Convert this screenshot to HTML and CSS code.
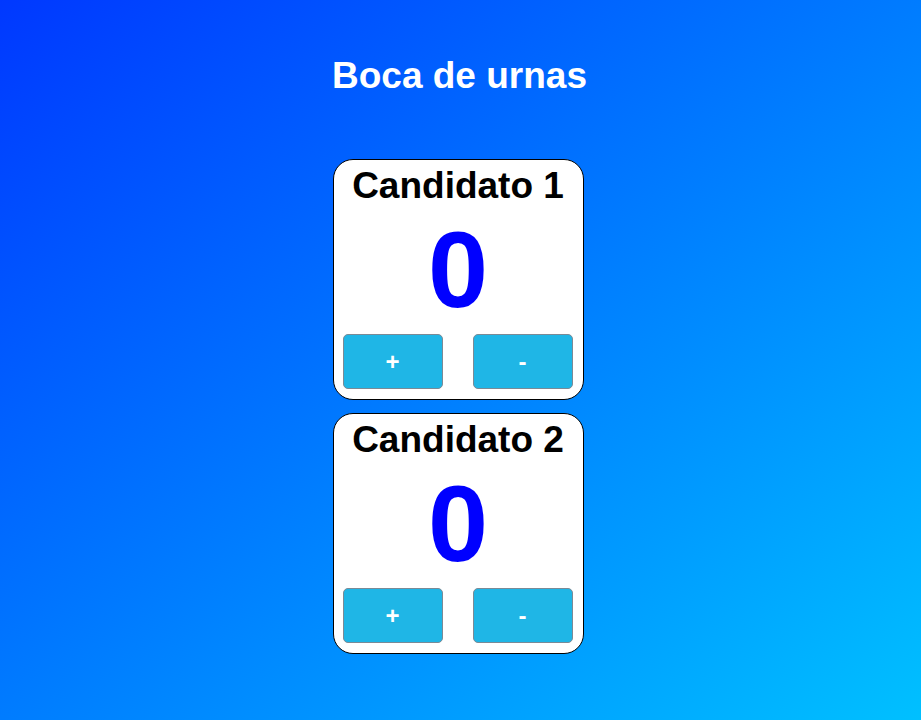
FILE: index.html
```html
<!DOCTYPE html>
<html lang="pt">
<head>
<meta charset="utf-8">
<title>Boca de urnas</title>
<link rel="stylesheet" href="styles.css">
</head>
<body>
<main class="page">
  <h1 class="title">Boca de urnas</h1>
  <div class="cards">
    <section class="card">
      <h2 class="card-name">Candidato 1</h2>
      <div class="count">0</div>
      <div class="actions">
        <button class="btn">+</button>
        <button class="btn">-</button>
      </div>
    </section>
    <section class="card">
      <h2 class="card-name">Candidato 2</h2>
      <div class="count">0</div>
      <div class="actions">
        <button class="btn">+</button>
        <button class="btn">-</button>
      </div>
    </section>
  </div>
</main>
</body>
</html>
```

FILE: styles.css
```css
html, body {
  margin: 0;
  padding: 0;
  height: 100%;
}
body {
  background: linear-gradient(to bottom right, #0038ff, #00c0ff);
  font-family: "Liberation Sans", Arial, sans-serif;
}
.page {
  display: flex;
  flex-direction: column;
  align-items: center;
  padding-top: 55px;
}
.title {
  margin: 0 2px 63px 0;
  font-size: 37px;
  font-weight: bold;
  color: #fff;
  line-height: 41px;
}
.cards {
  display: flex;
  flex-direction: column;
  gap: 13px;
  margin-right: 5px;
}
.card {
  width: 249px;
  background: #fff;
  border: 1px solid #000;
  border-radius: 20px;
  padding: 5px 0 10px 0;
  display: flex;
  flex-direction: column;
  align-items: center;
}
.card-name {
  margin: 0;
  font-size: 37px;
  font-weight: bold;
  color: #000;
  line-height: 41px;
}
.count {
  font-size: 108px;
  font-weight: bold;
  color: #0000ff;
  line-height: 128px;
}
.actions {
  align-self: stretch;
  display: flex;
  justify-content: space-between;
  padding: 0 10px 0 9px;
}
.btn {
  width: 100px;
  height: 55px;
  background: #1fb6e6;
  border: 1px solid #7a8a96;
  border-radius: 5px;
  color: #fff;
  font-family: "Liberation Sans", Arial, sans-serif;
  font-size: 24px;
  font-weight: bold;
  cursor: pointer;
}
```
